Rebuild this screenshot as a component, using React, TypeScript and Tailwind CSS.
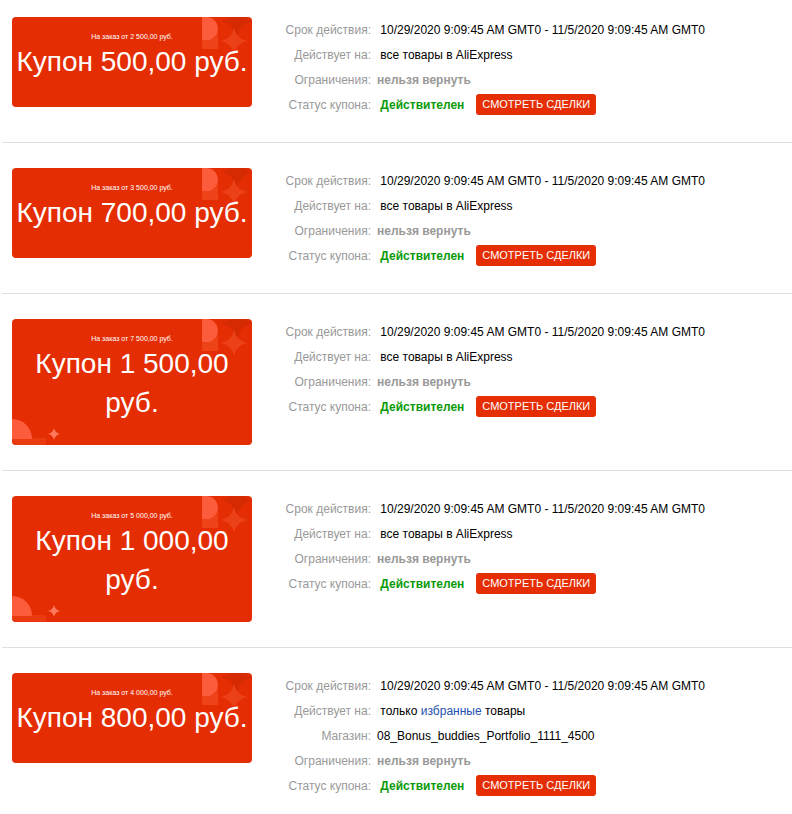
import * as React from 'react'

type Coupon = {
  min: string
  amount: string
  scope: 'all' | 'selected'
  store?: string
  tall?: boolean
}

const coupons: Coupon[] = [
  { min: '2 500,00', amount: '500,00', scope: 'all' },
  { min: '3 500,00', amount: '700,00', scope: 'all' },
  { min: '7 500,00', amount: '1 500,00', scope: 'all', tall: true },
  { min: '5 000,00', amount: '1 000,00', scope: 'all', tall: true },
  { min: '4 000,00', amount: '800,00', scope: 'selected', store: '08_Bonus_buddies_Portfolio_1111_4500' },
]

const PERIOD = '10/29/2020 9:09:45 AM GMT0 - 11/5/2020 9:09:45 AM GMT0'

function Sparkle({ r, fill, cx, cy }: { r: number; fill: string; cx: number; cy: number }) {
  const k = r * 0.18
  return (
    <path
      d={`M${cx} ${cy - r} Q${cx + k} ${cy - k} ${cx + r} ${cy} Q${cx + k} ${cy + k} ${cx} ${cy + r} Q${cx - k} ${cy + k} ${cx - r} ${cy} Q${cx - k} ${cy - k} ${cx} ${cy - r} Z`}
      fill={fill}
    />
  )
}

function CornerArt() {
  return (
    <svg width="50" height="36" viewBox="0 0 50 36" className="absolute right-0 top-0">
      <rect x="0" y="22" width="16" height="10" fill="#ee4219" />
      <path d="M0 0 H6 A12 12 0 0 1 16 11 A12 12 0 0 1 8 23 H0 Z" fill="#fd5c3c" />
      <path d="M8 23 A12 12 0 0 0 16 11 V23 Z" fill="#ee4219" />
      <Sparkle cx={35} cy={4} r={16} fill="#d62a02" />
      <Sparkle cx={32} cy={24} r={13} fill="#ec4018" />
    </svg>
  )
}

function BottomArt() {
  return (
    <svg width="60" height="26" viewBox="0 0 60 26" className="absolute bottom-0 left-0">
      <rect x="0" y="19" width="34" height="7" fill="#ea3a10" />
      <path d="M0 0 A20 20 0 0 1 20 20 H0 Z" fill="#fd5c3c" />
      <Sparkle cx={42} cy={15} r={6} fill="#ff7a5c" />
    </svg>
  )
}

function CouponCard({ c }: { c: Coupon }) {
  return (
    <div className="relative w-[240px] min-h-[90px] flex-shrink-0 self-start overflow-hidden rounded-[4px] bg-[#e52d03] px-[2px] pt-[15px] pb-[23px] text-center text-white">
      <CornerArt />
      {c.tall && <BottomArt />}
      <div className="relative text-[7px] leading-[10px]">На заказ от {c.min} руб.</div>
      <div className="relative text-[28px] leading-[39px]">Купон {c.amount} руб.</div>
    </div>
  )
}

function Row({ label, children }: { label: string; children: React.ReactNode }) {
  return (
    <div className="flex h-[25px] items-center">
      <div className="w-[88px] flex-shrink-0 text-right text-[#999]">{label}</div>
      <div className="ml-[6px] flex items-center">{children}</div>
    </div>
  )
}

function CouponItem({ c, first }: { c: Coupon; first: boolean }) {
  return (
    <div className={`flex gap-[31px] pl-[12px] pb-[25px] ${first ? 'pt-[17px]' : 'pt-[25px]'}`}>
      <CouponCard c={c} />
      <div className="text-[12px]">
        <Row label="Срок действия:">
          <span className="text-black">&nbsp;{PERIOD}</span>
        </Row>
        <Row label="Действует на:">
          {c.scope === 'all' ? (
            <span className="text-black">&nbsp;все товары в AliExpress</span>
          ) : (
            <span className="text-black">
              &nbsp;только <span className="text-[#2452b0]">избранные</span> товары
            </span>
          )}
        </Row>
        {c.store && (
          <Row label="Магазин:">
            <span className="text-black">{c.store}</span>
          </Row>
        )}
        <Row label="Ограничения:">
          <span className="font-bold text-[#999]">нельзя вернуть</span>
        </Row>
        <Row label="Статус купона:">
          <span className="font-bold text-[#0b9a0b]">&nbsp;Действителен</span>
          <button className="ml-[12px] h-[21px] rounded-[3px] bg-[#e62e04] px-[6px] text-[11px] text-white">
            СМОТРЕТЬ СДЕЛКИ
          </button>
        </Row>
      </div>
    </div>
  )
}

export default function App() {
  return (
    <div className="min-h-[814px] w-[792px] bg-white font-['Liberation_Sans',Arial,sans-serif]">
      {coupons.map((c, i) => (
        <React.Fragment key={i}>
          {i > 0 && <div className="ml-[2px] h-px bg-[#e0e0e0]" />}
          <CouponItem c={c} first={i === 0} />
        </React.Fragment>
      ))}
    </div>
  )
}
